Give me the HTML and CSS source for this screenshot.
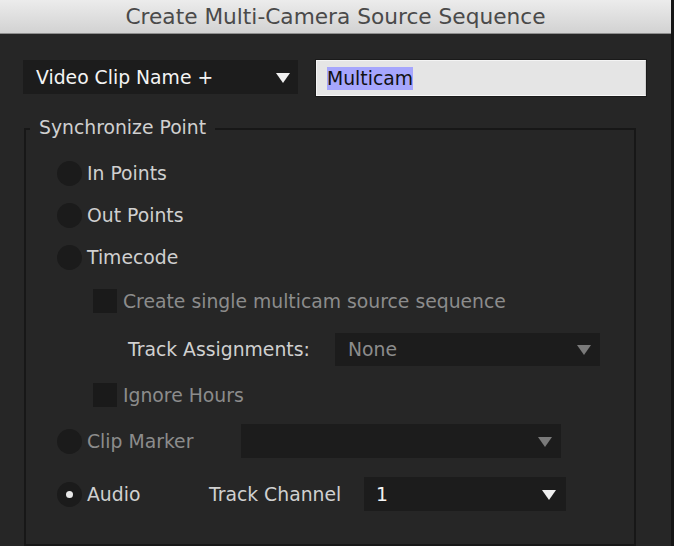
FILE: index.html
```html
<!DOCTYPE html>
<html>
<head>
<meta charset="utf-8">
<link rel="stylesheet" href="styles.css">
</head>
<body>
<div class="window">
  <div class="titlebar">Create Multi-Camera Source Sequence</div>
  <div class="toprow">
    <div class="select select-name"><span>Video Clip Name +</span><i class="arrow"></i></div>
    <div class="textfield"><span class="sel">Multicam</span></div>
  </div>
  <div class="group">
    <div class="legend">Synchronize Point</div>
    <div class="row r1"><span class="radio"></span><span class="label">In Points</span></div>
    <div class="row r2"><span class="radio"></span><span class="label">Out Points</span></div>
    <div class="row r3"><span class="radio"></span><span class="label">Timecode</span></div>
    <div class="row r4 sub"><span class="check"></span><span class="label dim">Create single multicam source sequence</span></div>
    <div class="row r5 sub2"><span class="label ta-label">Track Assignments:</span><div class="select select-ta dis"><span>None</span><i class="arrow"></i></div></div>
    <div class="row r6 sub"><span class="check"></span><span class="label dim">Ignore Hours</span></div>
    <div class="row r7"><span class="radio dimradio"></span><span class="label dim cm-label">Clip Marker</span><div class="select select-cm dis"><span></span><i class="arrow"></i></div></div>
    <div class="row r8"><span class="radio on"></span><span class="label au-label">Audio</span><span class="label tc-label">Track Channel</span><div class="select select-tc"><span>1</span><i class="arrow"></i></div></div>
  </div>
</div>
</body>
</html>
```
FILE: styles.css
```css
html, body {
  margin: 0;
  padding: 0;
  background: #262626;
  width: 674px;
  height: 546px;
  overflow: hidden;
}
.window {
  width: 671px;
  height: 546px;
  border-right: 3px solid #151515;
  background: #262626;
  font-family: "DejaVu Sans", sans-serif;
  font-size: 18.8px;
  color: #d0d0d0;
}
.titlebar {
  height: 33px;
  line-height: 33px;
  border-bottom: 1px solid #8e8e8e;
  background: linear-gradient(#ececec, #d2d2d2);
  color: #4a4a4a;
  text-align: center;
  font-family: "DejaVu Sans", sans-serif;
  font-size: 21.7px;
}
.toprow {
  display: flex;
  align-items: flex-start;
  padding: 26px 0 0 23px;
  height: 36px;
}
.select {
  display: flex;
  align-items: center;
  justify-content: space-between;
  background: #1c1c1c;
  color: #f4f4f4;
  box-sizing: border-box;
  height: 34px;
  padding: 0 8px 0 13px;
}
.arrow {
  width: 0;
  height: 0;
  border-left: 7px solid transparent;
  border-right: 7px solid transparent;
  border-top: 10px solid #f0f0f0;
  margin-top: 1px;
}
.select.dis { color: #8c8c8c; }
.select.dis .arrow { border-top-color: #7a7a7a; }
.select-name { width: 275px; }
.textfield {
  margin-left: 18px;
  width: 330px;
  height: 36px;
  box-sizing: border-box;
  background: #e5e5e5;
  border: 1px solid #f4f4f4;
  border-right-color: #cfcfcf;
  border-bottom-color: #f8f8f8;
  box-shadow: 0 0 0 1px #1a1a1a;
  display: flex;
  align-items: center;
  padding-left: 10px;
  color: #111;
}
.sel {
  background: #a6a6fd;
  height: 23px;
  line-height: 23px;
}
.group {
  position: relative;
  margin: 32px 0 0 24px;
  width: 612px;
  height: 418px;
  box-sizing: border-box;
  border: 2px solid #171717;
  padding-top: 22px;
  display: flex;
  flex-direction: column;
}
.legend {
  position: absolute;
  top: -14px;
  left: 4px;
  padding: 0 9px;
  background: #262626;
  line-height: 24px;
}
.row {
  display: flex;
  align-items: center;
  padding-left: 31px;
}
.r1 { height: 42px; }
.r2 { height: 42px; }
.r3 { height: 43px; }
.r4 { height: 44px; }
.r5 { height: 52px; }
.r6 { height: 40px; }
.r7 { height: 52px; }
.r8 { height: 54px; }
.sub { padding-left: 67px; }
.sub2 { padding-left: 102px; }
.radio {
  width: 25px;
  height: 25px;
  border-radius: 50%;
  background: #1b1b1b;
  margin-right: 5px;
  flex: none;
  display: flex;
  align-items: center;
  justify-content: center;
}
.radio.on::after {
  content: "";
  width: 7px;
  height: 7px;
  border-radius: 50%;
  background: #e8e8e8;
}
.check {
  width: 24px;
  height: 24px;
  background: #1a1a1a;
  margin-right: 6px;
  flex: none;
}
.label { white-space: nowrap; }
.dim { color: #8c8c8c; }
.ta-label { width: 207px; }
.select-ta { width: 265px; height: 33px; padding-right: 9px; }
.cm-label { width: 154px; }
.select-cm { width: 320px; height: 34px; padding-right: 9px; }
.au-label { width: 122px; }
.tc-label { width: 155px; }
.select-tc { width: 202px; height: 34px; padding-left: 12px; padding-right: 10px; }
```
